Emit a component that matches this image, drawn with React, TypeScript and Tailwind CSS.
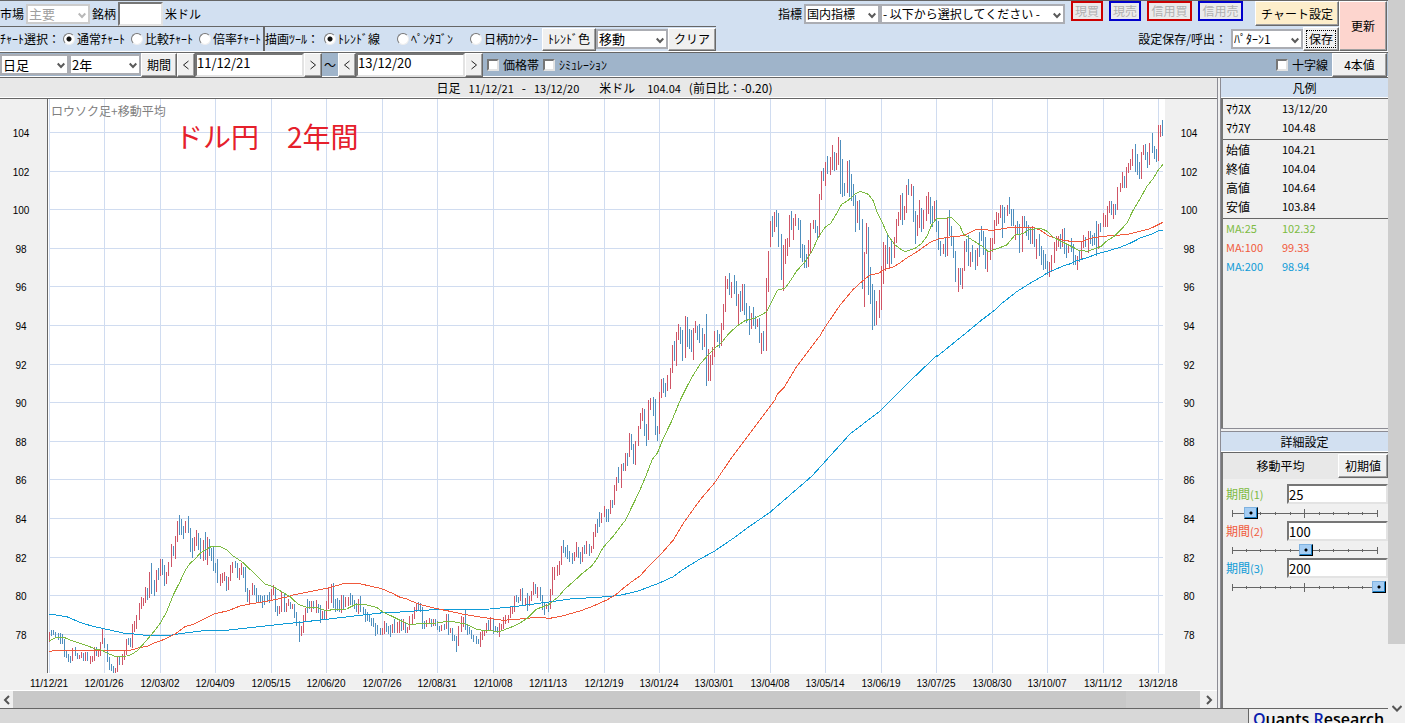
import { useState } from 'react'
import type { ReactNode } from 'react'
import clsx from 'clsx'

// 26 trading days per grid column. r = up day, b = down day, then high,low in
// thirds of a pixel below y0.
const candleColumns = [
  { y0: 401, bars: 'r397,425 b390,408 b390,405 b396,412 b399,419 b400,431 b402,431 b417,471 b451,473 b463,485 b469,488 r443,483 b441,468 b459,476 r465,476 r456,474 b459,482 r457,483 b456,483 r468,491 r468,485 r441,484 b442,467 r450,470 r425,468 r385,432' },
  { y0: 401, bars: 'b415,445 b432,486 b471,509 b491,512 b498,520 r504,518 r470,515 b470,495 r463,494 r451,480 r417,465 b414,434 b414,441 r372,443 r363,396 r346,388 r310,360 r291,328 r294,317 r261,309 b264,299 r217,294 b189,281 b240,287 r210,275 b204,240' },
  { y0: 401, bars: 'r177,228 b177,225 b196,257 r216,253 r186,228 r132,202 b138,168 r107,178 r64,125 b45,105 b58,104 b79,117 r64,98 b49,98 b85,155 b114,174 r111,153 r90,137 b99,151 b115,177 r120,182 b96,180 r112,196 b118,168 b144,183 b139,212' },
  { y0: 401, bars: 'b190,218 b178,249 r222,258 r219,249 r216,243 b228,273 r231,270 r195,243 r186,220 b183,204 b189,235 r204,240 r189,226 b201,235 b201,276 b264,306 r270,312 r249,286 b256,286 b264,305 b285,306 b285,307 b289,324 b285,315 b286,306 b276,308' },
  { y0: 401, bars: 'r267,301 r255,286 b264,336 b318,348 r318,342 r276,336 b282,336 r309,336 r297,319 b306,328 r312,328 b312,355 b336,378 b363,425 r378,408 r345,400 r324,366 b297,340 b303,328 r303,335 b303,328 r300,340 b313,340 b316,369 r333,360 b334,358' },
  { y0: 401, bars: 'r303,358 r265,327 r252,309 b249,324 b297,335 b294,333 b300,336 r285,339 b285,327 r291,321 r290,318 b279,315 b285,321 b300,327 b309,337 r297,342 b288,336 b321,345 b328,366 b336,363 b342,366 b354,378 b354,381 b370,408 b376,402 b384,405' },
  { y0: 301, bars: 'r684,705 r664,702 b670,697 b678,702 b676,710 r672,699 b657,699 r666,699 r660,699 b657,693 r657,690 b666,699 r681,699 r648,690 r641,672 r621,657 r612,636 b606,630 b610,636 b621,687 b663,687 r660,681 r654,669 b657,681 r657,678 b657,678' },
  { y0: 301, bars: 'b663,690 b678,696 r675,693 b672,690 r642,687 b642,705 r684,698 b684,723 b704,723 b708,756 r678,738 r648,696 r651,681 b630,690 b675,705 b681,702 b690,717 b705,726 b708,732 b717,732 r696,741 r690,720 r690,709 r669,699 b660,690 r651,690' },
  { y0: 301, bars: 'b657,702 b678,694 b681,699 r669,711 r672,690 r651,687 r645,672 r645,669 r618,654 r618,642 r588,635 b585,606 b591,609 r567,603 b564,617 r594,615 b579,633 r588,618 r573,603 r546,585 b552,582 r561,594 b561,602 b585,630 b606,645 r612,627' },
  { y0: 301, bars: 'b606,636 r567,627 r501,585 r501,540 r495,528 r483,525 r438,495 b420,459 b441,471 b435,477 b453,486 b459,492 r457,483 r426,471 b441,474 b456,492 r441,486 b435,462 r423,462 b432,468 r438,459 r396,447 r372,411 b357,399 b336,381 r339,369' },
  { y0: 301, bars: 'r318,351 b327,366 b327,366 r300,342 b300,324 r255,315 r231,273 b201,249 r192,264 b189,213 r159,213 b159,198 r99,171 b102,150 b132,192 r123,195 r78,138 r39,87 r24,63 b27,108 b72,138 r0,120 r-6,30 b-9,48 b-3,105 b78,123' },
  { y0: 21, bars: 'r816,942 r777,834 b774,820 b789,831 r765,813 r744,807 r675,759 b663,723 r636,738 r612,660 b621,672 b630,723 r588,714 b591,681 b627,687 b630,696 r624,720 r603,639 b618,660 b612,669 b624,690 r642,681 b582,798 r687,783 r705,783 r681,735' },
  { y0: 21, bars: 'r633,711 b630,666 b642,684 r609,678 r552,630 r468,576 r477,507 b459,525 r486,534 b465,522 b483,558 r522,615 b513,576 r492,573 b492,585 b549,609 b558,645 r579,627 b561,618 b588,627 r597,621 b594,669 r639,702 b633,693 r474,693 r393,516' },
  { y0: 21, bars: 'r303,381 b288,351 r276,336 b270,321 b279,381 b342,480 r375,513 r357,432 r354,408 r285,381 b273,330 r294,360 r282,318 b294,330 b300,414 b372,426 b375,444 b402,444 r360,441 r309,402 r300,327 b300,339 b318,357 r222,351 r153,240 b144,183' },
  { y0: 21, bars: 'r126,198 b108,162 r111,165 r75,150 b96,153 r99,150 r51,135 b60,222 b117,231 b189,228 r123,219 b120,231 b162,243 b192,258 b225,336 r243,309 b240,330 b297,507 r396,561 r309,402 b321,525 b441,552 b492,630 b510,618 r543,615 r510,594' },
  { y0: 21, bars: 'r438,570 r366,492 r375,453 b342,432 r381,447 b363,432 r351,414 r297,369 r276,318 r225,300 b219,315 r258,300 r195,279 b177,225 r192,228 b198,306 b273,372 r285,348 r240,324 b264,336 r270,327 r228,303 r216,282 b231,312 b258,321 r243,303' },
  { y0: 11, bars: 'b270,366 b333,420 b393,438 r402,432 b381,441 r321,438 b300,378 b348,408 b381,444 b423,516 r474,546 b474,525 r474,537 r393,483 b387,426 b375,468 r426,471 b405,456 b420,480 r414,468 b366,441 b348,393 b363,435 b381,477 r423,486 r384,450' },
  { y0: 11, bars: 'r384,426 r330,402 r306,348 r309,342 r285,324 b285,384 b291,339 r285,318 b261,312 b297,348 b297,348 r345,390 b333,375 b342,429 r318,426 b318,351 b333,378 b345,390 b354,402 r348,402 b354,411 r387,447 b372,438 b408,465 b420,480 b432,477' },
  { y0: 11, bars: 'b453,495 r456,501 r435,486 r396,459 r378,423 r378,411 b372,417 r357,411 b354,432 b402,444 r402,429 b384,426 b402,465 b435,465 r438,480 b423,456 r393,450 r375,414 b381,411 r363,429 b363,402 b375,408 b369,405 b333,438 r342,417 b339,366' },
  { y0: 11, bars: 'r309,351 r315,351 r288,351 r273,309 b273,315 r282,327 b282,315 r231,300 r219,246 r186,234 b198,234 r171,234 r159,189 r147,180 r117,168 b102,186 b132,195 b156,207 r126,207 r105,135 b102,150 b126,174 r99,165 b69,129 b108,147 b117,156' },
  { y0: 11, bars: 'r45,153 r45,81 b30,78' },
]

// Each average is stored in pieces with their own origin, same units as the candles.
const averages = [
  {
    color: '#0f9bd7',
    pieces: [
      { x0: 0, y0: 401, pts: '148,342 200,350 240,367 275,378 320,388 370,399 410,403 450,407 505,407 540,401 610,392 680,391 760,382 850,372 900,367 980,358 1080,346 1150,338' },
      { x0: 400, y0: 301, pts: '0,636 100,629 270,627 350,619 440,607 510,597 620,590 660,586 715,573 778,549 820,530 850,508 900,477 943,454 1000,415 1050,378 1110,337 1236,228 1350,102 1440,33' },
      { x0: 640, y0: 21, pts: '755,838 800,793 850,745 889,708' },
      { x0: 900, y0: 11, pts: '109,741 209,660 245,630 285,600 305,580 325,565 350,545 390,520 430,497 442,488 490,468 515,460 530,452 565,442 590,432 620,424 660,412 690,400 725,382 755,373 775,363 789,361' },
    ],
  },
  {
    color: '#f05a3c',
    pieces: [
      { x0: 0, y0: 401, pts: '148,454 175,451 390,451 415,444 445,438 465,428 490,419 525,402 555,380 580,373 610,358 645,341 685,332 720,318 750,312 810,302 860,291 880,285 935,274 985,264 1030,251 1080,251 1100,256 1145,266 1175,279' },
      { x0: 400, y0: 301, pts: '0,592 20,597 50,610 80,619 120,628 150,634 190,643 240,651 310,661 360,657 410,652 450,655 490,647 540,633 580,618 620,600 645,586 670,565 695,545 720,528 745,500 778,468 820,420 850,370 900,300 943,250 990,180 1050,100' },
      { x0: 640, y0: 21, pts: '405,840 412,822 432,803 465,747 500,700 540,647 556,620 600,556 640,508 665,485 690,465 715,460 735,448 760,441' },
      { x0: 900, y0: 11, pts: '0,459 20,444 55,423 90,397 115,387 155,380 190,377 230,358 280,361 320,354 400,352 420,360 445,377 470,386 510,394 550,393 580,383 640,376 680,374 750,356 789,337' },
    ],
  },
  {
    color: '#7dbb42',
    pieces: [
      { x0: 0, y0: 401, pts: '148,423 165,414 190,411 210,420 240,430 265,438 285,447 307,451 325,461 345,469 380,468 395,463 412,452 430,432 455,403 481,370 500,335 520,285 540,245 555,212 570,190 585,178 600,160 620,147 635,139 660,139 680,149 700,168 715,178 730,188 750,208 770,228 795,252 820,260 845,275 870,290 895,313 920,322 950,323 980,333 1000,328 1040,327 1065,314 1100,315 1130,322 1150,337 1170,346' },
      { x0: 400, y0: 301, pts: '0,661 30,675 60,670 110,669 150,663 180,669 200,673 230,688 255,692 300,694 330,683 355,672 380,656 410,627 445,615 475,590 495,567 520,545 545,522 575,498 590,477 610,442 640,408 675,362 700,312 720,270 740,222 757,178 772,160 790,115 815,63' },
      { x0: 640, y0: 21, pts: '122,837 140,801 160,765 180,733 205,704 225,684 245,668 265,642 290,619 315,602 345,594 370,582 382,572 395,545 412,511 435,505 450,484 470,453 495,425 515,395 535,352 555,322 572,310 590,280 605,253 625,241 645,222 660,214 685,223 700,243 710,273 730,315 745,348 765,375' },
      { x0: 900, y0: 11, pts: '0,416 15,425 45,415 65,400 80,380 95,345 109,326 155,323 180,348 190,372 220,392 245,408 265,425 295,415 320,405 345,375 370,371 385,360 420,354 440,363 460,382 485,395 510,407 535,420 560,424 590,415 605,408 620,393 645,377 660,362 680,340 700,300 720,267 740,230 760,205 775,180 789,163' },
    ],
  },
]

const dates = [
  '11/12/21', '12/01/26', '12/03/02', '12/04/09', '12/05/15', '12/06/20', '12/07/26',
  '12/08/31', '12/10/08', '12/11/13', '12/12/19', '13/01/24', '13/03/01', '13/04/08',
  '13/05/14', '13/06/19', '13/07/25', '13/08/30', '13/10/07', '13/11/12', '13/12/18',
]

const prices = [104, 102, 100, 98, 96, 94, 92, 90, 88, 86, 84, 82, 80, 78]

const dayX = (day: number) => 49 + Math.round(day * 2.1327)
const priceY = (row: number) => Math.round(33 + row * 38.6)

const candles = candleColumns.flatMap((column, c) =>
  column.bars.split(' ').map((token, i) => {
    const [high, low] = token.slice(1).split(',').map(Number)
    const top = column.y0 + Math.round(high / 3)
    return {
      x: dayX(c * 26 + i),
      y: top,
      height: column.y0 + Math.round(low / 3) - top,
      fill: token[0] === 'r' ? '#cf5566' : '#4f8fbe',
    }
  }),
)

const averageLines = averages.map((line) => ({
  color: line.color,
  points: line.pieces
    .flatMap((piece) =>
      piece.pts.split(' ').map((pair) => {
        const [x, y] = pair.split(',').map(Number)
        return `${(piece.x0 + x / 3).toFixed(1)},${(piece.y0 + y / 3).toFixed(1)}`
      }),
    )
    .join(' '),
}))

const legendGroups = [
  [
    { label: 'ﾏｳｽX', value: '13/12/20', color: 'text-black' },
    { label: 'ﾏｳｽY', value: '104.48', color: 'text-black' },
  ],
  [
    { label: '始値', value: '104.21', color: 'text-black' },
    { label: '終値', value: '104.04', color: 'text-black' },
    { label: '高値', value: '104.64', color: 'text-black' },
    { label: '安値', value: '103.84', color: 'text-black' },
  ],
  [
    { label: 'MA:25', value: '102.32', color: 'text-[#7dbb42]' },
    { label: 'MA:100', value: '99.33', color: 'text-[#f05a3c]' },
    { label: 'MA:200', value: '98.94', color: 'text-[#0f9bd7]' },
  ],
]

const bevel =
  'shrink-0 whitespace-nowrap border border-t-white border-l-white border-r-[#696969] border-b-[#696969] shadow-[inset_-1px_-1px_0_#a0a0a0]'
const sunken = 'border-2 border-t-[#767676] border-l-[#767676] border-r-[#e3e3e3] border-b-[#e3e3e3] bg-white'

function PushButton({ className, children, label }: { className?: string; children: ReactNode; label?: string }) {
  return (
    <button type="button" aria-label={label} className={clsx(bevel, className)}>
      {children}
    </button>
  )
}

type SelectBoxProps = { id: string; options: string[]; className: string; disabled?: boolean; label?: string }

function SelectBox({ id, options, className, disabled, label }: SelectBoxProps) {
  return (
    <div className={clsx('relative shrink-0', className)}>
      <select
        id={id}
        disabled={disabled}
        aria-label={label}
        className={clsx(
          'block h-full w-full appearance-none border-2 bg-white pl-px',
          disabled ? 'border-[#cccccc] text-[#a0a0a0]' : 'border-[#abadb3] text-black',
        )}
      >
        {options.map((option) => (
          <option key={option}>{option}</option>
        ))}
      </select>
      <svg
        className={clsx('pointer-events-none absolute right-1 top-2 h-2 w-2', disabled ? 'text-[#b8b8b8]' : 'text-[#5a5a5a]')}
        viewBox="0 0 8 8"
        fill="none"
        stroke="currentColor"
        strokeWidth="2"
      >
        <path d="M0.7 1.5L4 5L7.3 1.5" />
      </svg>
    </div>
  )
}

function Radio({ name, text, checked }: { name: string; text: string; checked?: boolean }) {
  return (
    <label className="flex shrink-0 items-center gap-0.5 whitespace-nowrap">
      <input
        type="radio"
        name={name}
        defaultChecked={checked}
        className="h-3 w-3 appearance-none rounded-full border border-t-[#777777] border-l-[#777777] border-r-[#eeeeee] border-b-[#eeeeee] bg-white checked:bg-[radial-gradient(circle,#111_2px,#fff_3px)]"
      />
      {text}
    </label>
  )
}

function Check({ text }: { text: string }) {
  return (
    <label className="flex shrink-0 items-center gap-1 whitespace-nowrap">
      <input type="checkbox" className={clsx('h-3 w-3 appearance-none checked:bg-gray-500', sunken)} />
      {text}
    </label>
  )
}

function DateField({ label, value }: { label: string; value: string }) {
  return (
    <div className="flex shrink-0">
      <PushButton className="h-6 w-4.5 bg-[#f0f0f0]" label={`${label} 前へ`}>
        <Arrow d="M7 1L2 5L7 9" />
      </PushButton>
      <input aria-label={label} defaultValue={value} className={clsx('h-6 w-[109px] pb-1 text-[13px]', sunken)} />
      <PushButton className="h-6 w-4.5 bg-[#f0f0f0]" label={`${label} 次へ`}>
        <Arrow d="M2 1L7 5L2 9" />
      </PushButton>
    </div>
  )
}

function Arrow({ d }: { d: string }) {
  return (
    <svg className="mx-auto h-2.5 w-2.5" viewBox="0 0 9 10" fill="none" stroke="#222222">
      <path d={d} />
    </svg>
  )
}

function Toolbar() {
  return (
    <header className="border-t border-[#666666]">
      <div className="flex justify-between border-b border-white bg-[#d2e0f1] pr-px">
        <div>
          <div className="flex h-[25px] items-center gap-0.5">
            <label htmlFor="market">市場</label>
            <SelectBox id="market" options={['主要']} disabled className="h-5 w-16 text-[13px]" />
            <label htmlFor="symbol">銘柄</label>
            <input id="symbol" className={clsx('h-6 w-[45px]', sunken)} />
            <span>米ドル</span>
          </div>
          <div className="flex h-[25px] items-center border-t border-[#666666]">
            <div className="flex h-full items-center gap-1.5">
              <span className="w-[57px] whitespace-nowrap">ﾁｬｰﾄ選択：</span>
              <Radio name="chart" text="通常ﾁｬｰﾄ" checked />
              <Radio name="chart" text="比較ﾁｬｰﾄ" />
              <Radio name="chart" text="倍率ﾁｬｰﾄ" />
            </div>
            <div className="ml-0.5 flex h-full items-center border-l-2 border-[#666666]">
              <span className="w-[59px] whitespace-nowrap">描画ﾂｰﾙ：</span>
              <div className="flex items-center gap-[17px]">
                <Radio name="tool" text="ﾄﾚﾝﾄﾞ線" checked />
                <Radio name="tool" text="ﾍﾟﾝﾀｺﾞﾝ" />
                <Radio name="tool" text="日柄ｶｳﾝﾀｰ" />
              </div>
            </div>
            <PushButton className="ml-1 h-[23px] w-[54px] bg-[#f0f0f0]">ﾄﾚﾝﾄﾞ色</PushButton>
            <SelectBox id="move" label="トレンド操作" options={['移動']} className="h-5 w-[72px] text-[13px]" />
            <PushButton className="h-[23px] w-12 bg-[#f0f0f0]">クリア</PushButton>
          </div>
        </div>

        <div className="flex">
          <div>
            <div className="flex h-[25px] items-center">
              <label htmlFor="index" className="mr-0.5">指標</label>
              <SelectBox id="index" options={['国内指標']} className="h-5 w-[76px]" />
              <SelectBox id="detail" label="指標詳細" options={['- 以下から選択してください -']} className="h-5 w-[185px]" />
              <div className="ml-1.5 mr-3 flex items-center gap-1.5 self-start text-[#b0b0b0]">
                <button type="button" className="h-5 w-8 border-2 border-[#cc0000] bg-[#ebebeb] leading-4">現買</button>
                <button type="button" className="h-5 w-8 border-2 border-[#0000cc] bg-[#ebebeb] leading-4">現売</button>
                <button type="button" className="h-5 w-[45px] border-2 border-[#cc0000] bg-[#ebebeb] leading-4">信用買</button>
                <button type="button" className="h-5 w-[45px] border-2 border-[#0000cc] bg-[#ebebeb] leading-4">信用売</button>
              </div>
              <PushButton className="h-[25px] w-[84px] bg-[#fdeecb]">チャート設定</PushButton>
            </div>
            <div className="flex h-[25px] items-center justify-end">
              <label htmlFor="pattern" className="mr-1">設定保存/呼出：</label>
              <SelectBox id="pattern" options={['ﾊﾟﾀｰﾝ1']} className="h-5 w-[72px]" />
              <PushButton className="h-6 w-9 bg-[#f0f0f0] p-0.5">
                <span className="block border border-dotted border-black leading-4">保存</span>
              </PushButton>
            </div>
          </div>
          <PushButton className="w-12 bg-[#fdd5ce]">更新</PushButton>
        </div>
      </div>

      <div className="flex h-[25px] items-center justify-between border-t border-b border-t-[#666666] border-b-white bg-[#9fb4ca] pr-px">
        <div className="flex items-center">
          <SelectBox id="interval" label="足種" options={['日足']} className="h-[21px] w-[69px] text-[13px]" />
          <SelectBox id="years" label="期間" options={['2年']} className="h-[21px] w-[72px] text-[13px]" />
          <PushButton className="h-6 w-9 bg-[#f0f0f0]">期間</PushButton>
          <DateField label="開始日" value="11/12/21" />
          <span className="w-4 text-center">～</span>
          <DateField label="終了日" value="13/12/20" />
          <div className="ml-1 flex gap-1">
            <Check text="価格帯" />
            <Check text="ｼﾐｭﾚｰｼｮﾝ" />
          </div>
        </div>
        <div className="flex items-center gap-1">
          <Check text="十字線" />
          <PushButton className="h-6 w-[55px] bg-[#f0f0f0]">4本値</PushButton>
        </div>
      </div>
    </header>
  )
}

function PriceChart() {
  const [bottom, lastX] = [574, 1163]
  return (
    <svg width="1217" height="591" className="block font-['Liberation_Sans',sans-serif] text-[10px]">
      <rect x="48" width="1117" height="575" fill="#ffffff" />
      <g fill="#d0dcf0" shapeRendering="crispEdges">
        {prices.map((price, i) => (
          <rect key={price} x="49" y={priceY(i)} width={lastX - 49} height="1" />
        ))}
        {dates.map((date, i) => (
          <rect key={date} x={dayX(i * 26)} y="0" width="1" height={bottom} />
        ))}
      </g>
      <rect x="47" width="1" height={bottom} fill="#666666" />
      <g shapeRendering="crispEdges">
        {candles.map((bar) => (
          <rect key={bar.x} x={bar.x} y={bar.y} width="1" height={bar.height} fill={bar.fill} />
        ))}
        {averageLines.map((line) => (
          <polyline key={line.color} points={line.points} fill="none" stroke={line.color} />
        ))}
      </g>
      <g textAnchor="middle">
        {prices.map((price, i) => (
          <g key={price}>
            <text x="21" y={priceY(i) + 5}>{price}</text>
            <text x="1189" y={priceY(i) + 5}>{price}</text>
          </g>
        ))}
        {dates.map((date, i) => (
          <text key={date} x={dayX(i * 26)} y="588">{date}</text>
        ))}
      </g>
      <g className="font-['Noto_Sans_CJK_JP',sans-serif]">
        <text x="51" y="17" className="text-[12px]" fill="#808080">ロウソク足+移動平均</text>
        <text x="175" y="49" className="text-[28px]" fill="#e5202b">ドル円　2年間</text>
      </g>
    </svg>
  )
}

function PaneHeader({ children }: { children: ReactNode }) {
  return (
    <h2 className="flex h-[21px] items-center justify-center border-b border-[#666666] bg-[#d2e0f1] shadow-[inset_0_-1px_0_#fff]">
      {children}
    </h2>
  )
}

function PeriodControl({ no, initial, color }: { no: number; initial: number; color: string }) {
  const [value, setValue] = useState(initial)
  const id = `period-${no}`
  return (
    <div>
      <div className="flex h-[22px] items-center">
        <label htmlFor={id} className={clsx('w-[61px] shrink-0', color)}>
          期間<span className="text-[11px]">({no})</span>
        </label>
        <input
          id={id}
          value={value}
          onChange={(e) => setValue(Number(e.target.value) || 0)}
          className={clsx('h-5 w-full min-w-0 text-[13px]', sunken)}
        />
      </div>
      <div className="relative h-[15px] w-40">
        <svg className="absolute left-0 top-0" width="160" height="15" fill="#666666" shapeRendering="crispEdges">
          <rect x="6" y="8" width="146" height="1" />
          {[0, 14, 28, 43, 58, 72, 87, 101, 116, 130, 145].map((x, i) => (
            <rect key={x} x={6 + x} y={i === 5 ? 4 : i % 10 ? 7 : 5} width="1" height={i === 5 ? 9 : i % 10 ? 3 : 7} />
          ))}
        </svg>
        <input
          type="range"
          min={1}
          max={200}
          value={value}
          aria-label={`期間(${no})`}
          onChange={(e) => setValue(Number(e.target.value))}
          className="absolute left-0 top-0.5 m-0 h-3 w-40 appearance-none bg-transparent [&::-webkit-slider-thumb]:h-3 [&::-webkit-slider-thumb]:w-3.5 [&::-webkit-slider-thumb]:appearance-none [&::-webkit-slider-thumb]:border [&::-webkit-slider-thumb]:border-t-[#7fb2e0] [&::-webkit-slider-thumb]:border-l-[#7fb2e0] [&::-webkit-slider-thumb]:border-r-black [&::-webkit-slider-thumb]:border-b-black [&::-webkit-slider-thumb]:bg-[radial-gradient(circle,#000_1px,#a5cdf3_2px)] [&::-webkit-slider-thumb]:shadow-[inset_-1px_-1px_0_#1b7fc4]"
        />
      </div>
    </div>
  )
}

function SidePanel() {
  return (
    <aside className="flex w-[171px] shrink-0 flex-col border-l-4 border-double border-[#8c8c94]">
      <section className="flex h-[350px] flex-col">
        <PaneHeader>凡例</PaneHeader>
        <div className="flex-1 border-l-2 border-[#777777]">
          {legendGroups.map((group, i) => (
            <dl
              key={group[0].label}
              className={clsx('leading-[19px]', i < 2 && 'border-b border-[#666666] pb-0.5')}
            >
              {group.map((row) => (
                <div key={row.label} className={clsx('flex pl-[3px]', row.color)}>
                  <dt className={clsx('w-14', i === 2 && 'text-[11px]')}>{row.label}</dt>
                  <dd className="text-[11px]">{row.value}</dd>
                </div>
              ))}
            </dl>
          ))}
        </div>
      </section>
      <section className="flex min-h-0 flex-1 flex-col border-t-4 border-double border-[#8c8c94]">
        <PaneHeader>詳細設定</PaneHeader>
        <div className="flex-1 border-l-2 border-[#777777]">
          <div className="flex h-[26px] items-center bg-[#e8e8e8]">
            <h3 className="flex-1 text-center">移動平均</h3>
            <PushButton className="h-6 w-[50px] bg-[#f0f0f0]">初期値</PushButton>
          </div>
          <div className="flex flex-col pl-[3px] pt-1">
            <PeriodControl no={1} initial={25} color="text-[#7dbb42]" />
            <PeriodControl no={2} initial={100} color="text-[#f05a3c]" />
            <PeriodControl no={3} initial={200} color="text-[#0f9bd7]" />
          </div>
        </div>
      </section>
    </aside>
  )
}

function ScrollChevron({ d }: { d: string }) {
  return (
    <svg className="h-2.5 w-2.5 shrink-0" viewBox="0 0 10 10" fill="none" stroke="#555555" strokeWidth="2">
      <path d={d} />
    </svg>
  )
}

export default function App() {
  return (
    <div className="flex h-screen overflow-hidden bg-white pr-1.5 font-['Noto_Sans_CJK_JP',sans-serif] text-[12px] leading-4 text-black">
      <div className="flex min-w-0 flex-1 flex-col bg-[#f0f0f0]">
        <Toolbar />
        <div className="flex min-h-0 flex-1 border-t border-[#666666]">
          <main className="flex min-w-0 flex-1 flex-col">
            <h1 className="flex h-[21px] shrink-0 items-center justify-center gap-2 border-b border-[#666666] bg-[#e8e8e8] pr-2 shadow-[inset_0_-1px_0_#fff]">
              <span>日足</span>
              <span className="text-[11px]">11/12/21</span>
              <span>-</span>
              <span className="text-[11px]">13/12/20</span>
              <span className="ml-3 mr-1">米ドル</span>
              <span className="text-[11px]">104.04</span>
              <span>(前日比：-0.20)</span>
            </h1>
            <div className="min-h-0 flex-1 overflow-hidden">
              <PriceChart />
            </div>
            <div className="flex h-[18px] shrink-0 items-center border-t border-white">
              <div className="flex w-[13px] justify-center">
                <ScrollChevron d="M7 1L3 5L7 9" />
              </div>
              <div className="h-full flex-1 bg-[#c8c8c8]" />
              <div className="h-full w-[74px] bg-[#cdcdcd]" />
              <div className="flex w-[17px] justify-center">
                <ScrollChevron d="M3 1L7 5L3 9" />
              </div>
            </div>
          </main>
          <SidePanel />
        </div>
        <footer className="flex h-[15px] shrink-0 border-t border-[#666666]">
          <div className="flex-1 bg-[#d8d8d8]" />
          <div className="w-[140px] border-l border-[#666666] pl-1 font-['Open_Sans',sans-serif] text-[16px] font-semibold leading-5 whitespace-nowrap">
            <span className="text-[#0a1fae]">Q</span>uants <span className="text-[#0a1fae]">R</span>esearch
          </div>
        </footer>
      </div>
      <div className="flex w-[17px] flex-col items-center bg-[#f0f0f0]">
        <div className="h-[644px] w-full bg-[#cdcdcd]" />
        <div className="mt-auto mb-2.5">
          <ScrollChevron d="M0.5 3L5 7.5L9.5 3" />
        </div>
      </div>
    </div>
  )
}
